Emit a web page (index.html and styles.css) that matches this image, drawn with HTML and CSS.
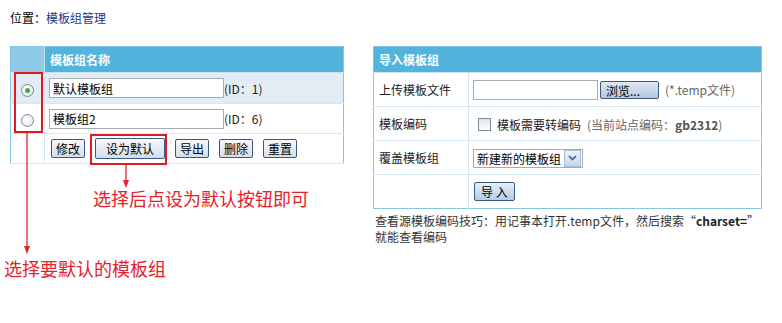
FILE: index.html
```html
<!DOCTYPE html>
<html lang="zh-CN">
<head>
    <meta charset="UTF-8">
    <title>模板组管理</title>
    <link rel="stylesheet" href="styles.css">
</head>
<body>
    <div class="crumb">位置：<a href="#" class="crumb-link">模板组管理</a></div>

    <div class="panels">
        <div class="panel-left">
            <table class="grid">
                <tr class="head">
                    <th class="sel-head"></th>
                    <th>模板组名称</th>
                </tr>
                <tr class="row-on">
                    <td class="sel"><span class="radio checked"></span></td>
                    <td><input class="txt" type="text" value="默认模板组"><span class="id">(ID：1)</span></td>
                </tr>
                <tr class="row">
                    <td class="sel"><span class="radio"></span></td>
                    <td><input class="txt" type="text" value="模板组2"><span class="id">(ID：6)</span></td>
                </tr>
                <tr class="row">
                    <td class="sel"></td>
                    <td>
                        <div class="btns">
                            <button class="btn">修改</button>
                            <button class="btn wide">设为默认</button>
                            <button class="btn">导出</button>
                            <button class="btn">删除</button>
                            <button class="btn">重置</button>
                        </div>
                    </td>
                </tr>
            </table>
        </div>

        <div class="panel-right">
            <table class="grid form">
                <tr class="head">
                    <th colspan="2">导入模板组</th>
                </tr>
                <tr class="frow">
                    <td class="label">上传模板文件</td>
                    <td>
                        <input class="file-txt" type="text"><button class="btn browse">浏览...</button><span class="hint">(*.temp文件)</span>
                    </td>
                </tr>
                <tr class="frow">
                    <td class="label">模板编码</td>
                    <td>
                        <span class="check"></span><span class="check-label">模板需要转编码</span><span class="hint">(当前站点编码：<b>gb2312</b>)</span>
                    </td>
                </tr>
                <tr class="frow">
                    <td class="label">覆盖模板组</td>
                    <td>
                        <span class="select">新建新的模板组<span class="select-arrow"><svg width="9" height="6" viewBox="0 0 9 6"><path d="M1 1 L4.5 4.5 L8 1" fill="none" stroke="#3b5f8f" stroke-width="1.6"/></svg></span></span>
                    </td>
                </tr>
                <tr class="frow last">
                    <td class="label"></td>
                    <td><button class="btn import">导 入</button></td>
                </tr>
            </table>
            <p class="tip">查看源模板编码技巧：用记事本打开.temp文件，然后搜索“<b>charset=</b>”<br>就能查看编码</p>
        </div>
    </div>

    <!-- 说明标注 -->
    <div class="mark mark-radio"></div>
    <div class="mark mark-btn"></div>
    <svg class="arrows" width="782" height="323" viewBox="0 0 782 323">
        <line x1="27" y1="133" x2="27" y2="247" stroke="#e62129" stroke-width="1.3"/>
        <path d="M24 246 L30 246 L27 254 Z" fill="#e62129"/>
        <line x1="126" y1="165" x2="126" y2="181" stroke="#e62129" stroke-width="1.3"/>
        <path d="M123 180 L129 180 L126 188 Z" fill="#e62129"/>
    </svg>
    <div class="note note-btn">选择后点设为默认按钮即可</div>
    <div class="note note-radio">选择要默认的模板组</div>
</body>
</html>
```

FILE: styles.css
```css
body {
    margin: 0;
    font-family: "Noto Sans CJK SC", "DejaVu Sans", sans-serif;
    font-size: 12px;
    color: #222;
    background: #fff;
    position: relative;
    width: 782px;
    height: 323px;
    overflow: hidden;
}
.crumb {
    padding: 10px 10px 0;
    line-height: 16px;
    color: #000;
}
.crumb-link {
    color: #1a3a8a;
    text-decoration: none;
}
.panels {
    display: flex;
    align-items: flex-start;
    gap: 29px;
    padding-left: 10px;
    margin-top: 20px;
}
.panel-left {
    width: 334px;
}
.panel-right {
    width: 389px;
}
.grid {
    width: 100%;
    border-collapse: collapse;
    border: 1px solid #86c5e3;
}
.grid th {
    height: 25px;
    padding: 0 0 0 5px;
    background: #52b3dc;
    color: #fff;
    font-weight: bold;
    text-align: left;
    border-bottom: 1px solid #c7e3f2;
}
.grid th.sel-head {
    width: 28px;
    background: #8fcbe8;
    border-right: 1px solid #c7e3f2;
}
.grid td {
    padding: 0 0 0 4px;
    border-bottom: 1px solid #d3e8f4;
}
.grid td.sel {
    text-align: center;
    padding: 0;
    border-right: 1px solid #d3e8f4;
}
.row-on td {
    height: 30px;
    background: #e2ecf5;
}
.row td {
    height: 29px;
}
.radio {
    display: inline-block;
    width: 11px;
    height: 11px;
    border: 1px solid #7c8a99;
    border-radius: 50%;
    background: radial-gradient(circle at 40% 35%, #fff, #dde3ea);
    vertical-align: middle;
    position: relative;
}
.radio.checked::after {
    content: "";
    position: absolute;
    left: 3px;
    top: 3px;
    width: 5px;
    height: 5px;
    border-radius: 50%;
    background: #3fae3a;
}
.txt {
    width: 175px;
    height: 20px;
    box-sizing: border-box;
    border: 1px solid #a5acb2;
    padding: 0 3px;
    font: 12px "Noto Sans CJK SC", sans-serif;
    color: #000;
    vertical-align: middle;
}
.id {
    vertical-align: middle;
    color: #222;
}
.btns {
    display: flex;
    gap: 10px;
    align-items: center;
    padding-left: 2px;
}
.btn {
    height: 19px;
    padding: 0 4px;
    border: 1px solid #3c5884;
    border-radius: 2px;
    background: linear-gradient(#f7f9fc, #d3deec);
    font: 12px "Noto Sans CJK SC", sans-serif;
    line-height: 17px;
    color: #000;
    cursor: pointer;
}
.btn.wide {
    height: 21px;
    padding: 0 10px;
}
.form td {
    height: 33px;
    border-bottom: 1px solid #d3e8f4;
}
.form td.label {
    width: 89px;
    padding-left: 5px;
    border-right: 1px solid #d3e8f4;
    color: #222;
}
.form tr.last td {
    height: 33px;
    border-bottom: none;
}
.file-txt {
    width: 125px;
    height: 20px;
    box-sizing: border-box;
    border: 1px solid #a5acb2;
    vertical-align: middle;
}
.browse {
    margin-left: 2px;
    width: 59px;
    height: 18px;
    text-align: left;
    padding: 0 5px;
    vertical-align: middle;
    background: linear-gradient(#dfe8f3, #b6c8de);
}
.hint {
    margin-left: 6px;
    color: #666;
    vertical-align: middle;
}
.hint b {
    color: #555;
}
.check {
    display: inline-block;
    width: 11px;
    height: 11px;
    margin-left: 5px;
    border: 1px solid #7c8a99;
    background: linear-gradient(#dfe3e8, #fff);
    vertical-align: middle;
}
.check-label {
    margin-left: 6px;
    vertical-align: middle;
}
.select {
    display: inline-flex;
    align-items: center;
    justify-content: space-between;
    width: 110px;
    height: 19px;
    box-sizing: border-box;
    border: 1px solid #a5acb2;
    padding-left: 3px;
    vertical-align: middle;
    color: #000;
}
.select-arrow {
    display: flex;
    align-items: center;
    justify-content: center;
    width: 15px;
    height: 15px;
    margin-right: 1px;
    border: 1px solid #a9bcd6;
    background: linear-gradient(#eef3fa, #c6d5ea);
}
.import {
    margin-left: 1px;
    padding: 0 6px;
    background: linear-gradient(#e6eef8, #b9cce3);
}
.tip {
    margin: 4px 0 0 2px;
    line-height: 16px;
    color: #333;
}
.tip b {
    color: #222;
}
.mark {
    position: absolute;
    border: 2px solid #e01b24;
    box-sizing: border-box;
}
.mark-radio {
    left: 14px;
    top: 72px;
    width: 29px;
    height: 61px;
}
.mark-btn {
    left: 90px;
    top: 134px;
    width: 77px;
    height: 31px;
}
.arrows {
    position: absolute;
    left: 0;
    top: 0;
    pointer-events: none;
}
.note {
    position: absolute;
    color: #e62129;
    font-size: 18px;
    line-height: 22px;
    white-space: nowrap;
}
.note-btn {
    left: 93px;
    top: 187px;
}
.note-radio {
    left: 4px;
    top: 257px;
}
```
